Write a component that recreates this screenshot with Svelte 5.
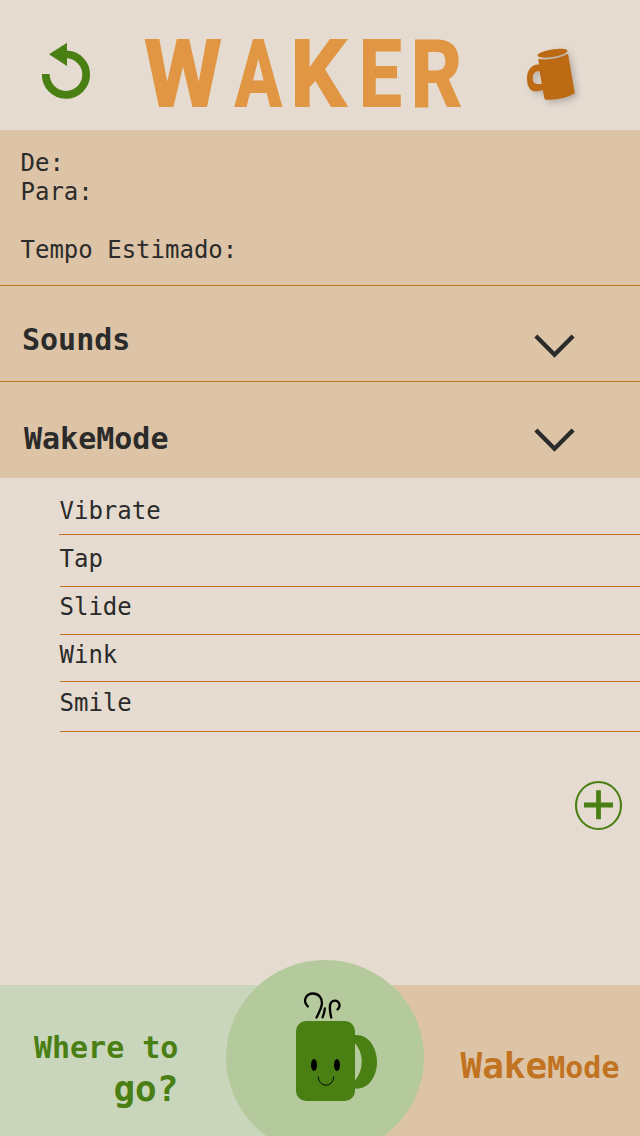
<script>
  const letters = [
    { ch: 'W', cell: 90, shift: -0.8, scale: 0.955 },
    { ch: 'A', cell: 60, shift: 0, scale: 0.75 },
    { ch: 'K', cell: 68, shift: -4.8, scale: 0.95 },
    { ch: 'E', cell: 52, shift: -4.1, scale: 0.82 },
    { ch: 'R', cell: 48, shift: -4.3, scale: 0.86 }
  ];
  const sections = [
    { title: 'Sounds', kind: 'sounds' },
    { title: 'WakeMode', kind: 'wake' }
  ];
  const modes = [
    { name: 'Vibrate', height: 57, top: 19 },
    { name: 'Tap', height: 52, top: 10 },
    { name: 'Slide', height: 48, top: 6 },
    { name: 'Wink', height: 47, top: 6 },
    { name: 'Smile', height: 50, top: 7 }
  ];
</script>

<div class="screen">
  <header>
    <svg class="back" width="50" height="58" viewBox="0 0 50 58">
      <path d="M4.8 32 A20.2 20.2 0 1 0 25 12.4" fill="none" stroke="#4a7f13" stroke-width="7.8" />
      <path d="M8 12.3 L26 0.8 V24 Z" fill="#4a7f13" />
    </svg>
    <h1>
      {#each letters as l}<span class="cell" style="width:{l.cell}px"><span class="glyph" style="transform:translateX({l.shift}px) scaleX({l.scale})">{l.ch}</span></span>{/each}
    </h1>
    <svg class="cup" width="60" height="64" viewBox="0 0 60 64">
      <g fill="#bc6a14">
        <ellipse cx="32.4" cy="13.2" rx="15.2" ry="3.8" transform="rotate(-9 32.4 13.2)" />
        <path d="M18.2 19 Q34 21 48 13.8 L54.8 53.3 Q43 60.5 26 59.7 Q24.3 59.7 24 57 Z" />
        <path fill-rule="evenodd" d="M18.5 24.5 C10 24.5 6.8 32 7 39 C7.2 47 10.5 52 17 51.3 L24 50 L20 24.5 Z M19.5 31 L22 43.8 C15 45 13 43 12.8 38.5 C12.7 34 15 31 19.5 31 Z" />
      </g>
    </svg>
  </header>

  <section class="trip">
    <p>De:</p>
    <p>Para:</p>
    <p class="time">Tempo Estimado:</p>
  </section>

  {#each sections as s}
    <section class="bar {s.kind}">
      <h2>{s.title}</h2>
      <svg width="44" height="28" viewBox="0 0 44 28">
        <path d="M2.9 4 L21.5 22.7 L40.1 4" fill="none" stroke="#2b2b2b" stroke-width="4.4" />
      </svg>
    </section>
  {/each}

  <ul>
    {#each modes as m}
      <li style="height:{m.height}px;padding-top:{m.top}px">{m.name}</li>
    {/each}
  </ul>

  <div class="add">
    <svg width="50" height="52" viewBox="0 0 50 52">
      <ellipse cx="24.5" cy="25.5" rx="22.5" ry="23.5" fill="none" stroke="#4a7f13" stroke-width="2.1" />
      <path d="M10 25 H39 M24.5 10.3 V39.3" stroke="#4a7f13" stroke-width="4.8" />
    </svg>
  </div>

  <footer>
    <div class="where"><span>Where to</span><strong>go?</strong></div>
    <div class="mode"><strong>Wake</strong><span>Mode</span></div>
    <svg class="badge" width="200" height="176" viewBox="0 0 200 176">
      <ellipse cx="100" cy="97.5" rx="99" ry="97.5" fill="#b4ca9c" />
      <g fill="#4a7f13">
        <rect x="71" y="61" width="59" height="80" rx="10" />
        <path d="M130 75 C143 74 152 87 152 102 C152 118 142 130 130 128.5 V120.5 C139 110 139 93 130 83.5 Z" />
      </g>
      <g fill="none" stroke="#000" stroke-width="2.3" stroke-linecap="round">
        <path d="M82.8 46.5 C77.5 41.5 80.5 33.6 88 33.5 C94 33.5 97.6 38.5 96.8 44.5 C96 50 93.3 53.5 91.5 57.5" />
        <path d="M106.2 57.5 C104.8 51 103.4 43.5 107.5 41.3 C111.5 39.2 115.3 42.8 114.4 46.5 C114.1 47.9 113.4 48.8 112.5 49.4" />
        <path d="M97.6 57.3 Q99.5 53 99.8 48.5" />
      </g>
      <ellipse cx="89" cy="105" rx="3" ry="6" />
      <ellipse cx="112" cy="105" rx="3" ry="6" />
      <path d="M93.3 116.5 C93.5 128 108.3 128 108.7 116.5" fill="none" stroke="#000" stroke-width="1" />
    </svg>
  </footer>
</div>

<style>
  :global(body) { background: #e5dbd1; }
  .screen, .screen * { box-sizing: border-box; }
  .screen {
    width: 640px; height: 1136px; overflow: hidden;
    display: flex; flex-direction: column;
    background: #e5dbd1; color: #2b2b2b;
    font: 24px/29px "DejaVu Sans Mono", monospace;
  }
  h1, h2, p, ul { margin: 0; padding: 0; }
  header { height: 130px; flex: none; display: flex; align-items: flex-start; padding-left: 41px; }
  .back { margin-top: 42px; flex: none; }
  h1 {
    display: flex; width: 318px; margin: 31px 0 0 54px; flex: none;
    font: bold 92.5px/88px Roboto, sans-serif; color: #e09643;
    -webkit-text-stroke: 1.8px #e09643;
  }
  .cell { display: block; flex: none; }
  .glyph { display: inline-block; transform-origin: 0 0; }
  .cup { margin: 40px 0 0 57px; flex: none; filter: drop-shadow(3px 3px 3px #0003); }
  .trip { height: 156px; flex: none; padding: 19px 20.5px 0; background: #ddc4a6; border-bottom: 1px solid #c17321; }
  .time { margin-top: 29px; }
  .bar { flex: none; height: 96px; display: flex; justify-content: space-between; align-items: flex-start; background: #ddc4a6; padding: 36px 63px 0 22px; }
  .sounds { border-bottom: 1px solid #c17321; }
  .wake { padding: 39px 63px 0 24px; }
  .bar svg { margin-top: 10px; }
  .wake svg { margin-top: 5px; }
  h2 { font-size: 30px; line-height: 36px; }
  ul { list-style: none; padding-left: 60px; }
  li { border-bottom: 1px solid #c17321; margin: 0; text-indent: -0.5px; }
  li:first-child { margin-left: -1px; text-indent: 0.5px; }
  .add { display: flex; justify-content: flex-end; padding: 48px 16px 0 0; }
  footer { position: relative; margin-top: auto; height: 151px; flex: none; display: flex; font-weight: bold; font-size: 30px; }
  footer strong { font-size: 36px; }
  .where { width: 325px; background: #cad6bc; color: #4a7f13; display: flex; flex-direction: column; align-items: flex-end; padding: 43px 146.6px 0 0; line-height: 39px; }
  .where strong { line-height: 44px; }
  .mode { flex: 1; background: #ddc4a6; color: #c17321; display: flex; align-items: baseline; padding: 59px 0 0 135.5px; line-height: 44px; }
  .badge { position: absolute; left: 225px; top: -25px; }
</style>
